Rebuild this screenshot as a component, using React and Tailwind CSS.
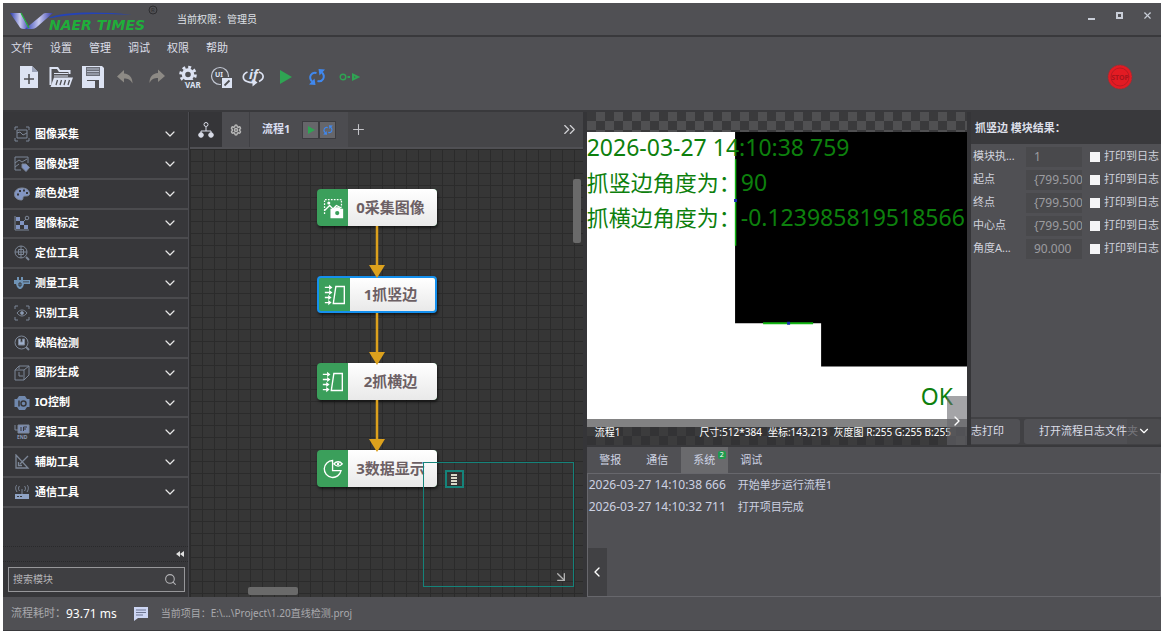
import clsx from "clsx";
import { ArrowDownRight, ChevronDown, ChevronLeft, ChevronRight, ChevronsRight, Plus, Search, Settings, X } from "lucide-react";

const MENUS = ["文件", "设置", "管理", "调试", "权限", "帮助"];

const RESULTS = [
    { name: "模块执...", value: "1" },
    { name: "起点", value: "{799.500" },
    { name: "终点", value: "{799.500" },
    { name: "中心点", value: "{799.500" },
    { name: "角度A...", value: "90.000" },
];

const LOG_TABS = [
    { label: "警报" },
    { label: "通信" },
    { label: "系统", active: true, count: 2 },
    { label: "调试" },
];

const LOGS = [
    { time: "2026-03-27 14:10:38 666", text: "开始单步运行流程1" },
    { time: "2026-03-27 14:10:32 711", text: "打开项目完成" },
];

const loopIcon = (
    <>
        <path d="M11.500 8C6.500 6.500 3 12 7 16.500M12.500 16c5 1.500 8.500-4 4.500-8.500" fill="none" stroke="#4088ee" strokeWidth="2" />
        <path d="M4 19.500 10.500 20l-1-6.500zM20 4.500 13.500 4l1 6.500z" fill="#4088ee" />
    </>
);

/* toolbar icons, 24x24 */
const TOOLS = [
    {
        name: "新建",
        icon: (
            <>
                <path d="M3 1h12l6 6v16H3z" fill="#dde3f3" />
                <path d="M15 1v6h6" fill="#9aa2b8" />
                <path d="M12 9v10M7 14h10" stroke="#505054" strokeWidth="1.6" />
            </>
        ),
    },
    {
        name: "打开",
        icon: (
            <>
                <path d="M1.500 20V3h7l2 3h10v3" fill="none" stroke="#dde3f3" strokeWidth="2" />
                <path d="M5 8.500h14M5 11h14" stroke="#dde3f3" strokeWidth="1" />
                <path d="M5 12.500h19l-3.500 9.500H1.500z" fill="#dde3f3" />
                <path d="M7 20l1.500-5M11 20l1.500-5M15 20l1.500-5M19 20l1.500-5" stroke="#505054" strokeWidth="1.300" />
            </>
        ),
    },
    {
        name: "保存",
        icon: (
            <>
                <path d="M1 1h20l2 2v20H1z" fill="#dde3f3" />
                <path d="M5 2h14v9H5z" fill="#6b6e78" />
                <path d="M6 4h12M6 6.500h12M6 9h12" stroke="#b9bfce" strokeWidth="1" />
                <path d="M6 15h12v8H6z" fill="#505054" />
                <path d="M6 16h8v7H6z" fill="#dde3f3" />
            </>
        ),
    },
    {
        name: "撤销",
        icon: <path d="M11 5 4 11.500l7 6v-4c4 0 6.500 1 8.500 5 0-6-3-9.500-8.500-10z" fill="#8d8a85" />,
    },
    {
        name: "重做",
        icon: <path d="M13 4.500 20 11l-7 6v-4c-4 0-6.500 1-8.500 5 0-6 3-9.500 8.500-10z" fill="#8d8a85" />,
    },
    {
        name: "变量",
        icon: (
            <>
                <circle cx="11" cy="9.500" r="4.500" fill="none" stroke="#dde3f3" strokeWidth="3.400" />
                <circle cx="11" cy="9.500" r="7.300" fill="none" stroke="#dde3f3" strokeWidth="3" strokeDasharray="2.860 2.870" />
                <path d="M8 15h16v9H8z" fill="#505054" />
                <text x="8" y="23" fontSize="8" fontWeight="bold" fill="#dde3f3">VAR</text>
            </>
        ),
    },
    {
        name: "界面",
        icon: (
            <>
                <circle cx="11" cy="11" r="8.500" fill="none" stroke="#c3c8d4" strokeWidth="1.200" />
                <text x="6" y="12" fontSize="7" fontWeight="bold" fill="#dde3f3">UI</text>
                <path d="M12 12h11v11H12z" fill="#505054" />
                <path d="M13 13h10v10H13z" fill="#dde3f3" />
                <path d="m15.500 20.500 5-5" stroke="#505054" strokeWidth="1.800" />
            </>
        ),
    },
    {
        name: "条件",
        icon: (
            <>
                <path d="M6.500 7C1 9 1 14.500 6 16.500c2 .9 5 1.300 7 1.200M18 7c5.500 2 5.500 7 0 9.500" fill="none" stroke="#dde3f3" strokeWidth="1.700" />
                <path d="m11.500 13.500 5 4-5 4z" fill="#dde3f3" />
                <text x="8" y="14" fontSize="13" fontStyle="italic" fontWeight="bold" fill="#dde3f3">if</text>
            </>
        ),
    },
    {
        name: "运行",
        icon: <path d="M7 5v14l12-7z" fill="#2fa453" />,
    },
    { name: "循环", icon: loopIcon },
    {
        name: "单步",
        icon: (
            <>
                <circle cx="6" cy="12" r="2.800" fill="none" stroke="#2fa453" strokeWidth="1.400" />
                <path d="M10.500 12h2.500" stroke="#2fa453" strokeWidth="2" />
                <path d="M16 9.500v5l5-2.500z" fill="none" stroke="#2fa453" strokeWidth="2" />
            </>
        ),
    },
];

/* module groups, 16x16 icons stroked with currentColor */
const MODULES = [
    { label: "图像采集", icon: <path d="M1 4V1h3M12 1h3v3M15 12v3h-3M4 15H1v-3M3 4h10v8H3zM3 7l3-1 3 3 4-2" /> },
    {
        label: "图像处理",
        icon: (
            <>
                <path d="M7 14H1V1h13v6M1 7l4-3 3 2 5-3M1 11l4-3" />
                <path d="M8 8h4l3.500 3.500-3.500 4L8 11.500z" fill="#8295c2" />
            </>
        ),
    },
    {
        label: "颜色处理",
        icon: (
            <>
                <path d="M8 2C3 2 .5 5 .5 8.500S4 14 7.500 14c2 0 1-2.500 2-3.500s5.500.5 6-2.500C15.500 4 12 2 8 2z" fill="#8295c2" />
                <path d="M3 8.500h2M5 5h2M9 4.500h2M12 7h2" stroke="#37373a" strokeWidth="2" />
            </>
        ),
    },
    {
        label: "图像标定",
        icon: (
            <>
                <path d="M1 1v14h14M3 13l9-9" />
                <path d="M2 2h4v4H2zM6 6h4v4H6zM2 10h4v4H2zM10 10h4v4h-4z" fill="#8295c2" stroke="none" />
                <circle cx="13" cy="3" r="1.800" />
            </>
        ),
    },
    {
        label: "定位工具",
        icon: (
            <>
                <circle cx="7" cy="7" r="6" />
                <path d="M7 1v12M1 7h12M4.500 4.500h5v5h-5z" />
                <path d="m12 12 3 3" strokeWidth="2" />
            </>
        ),
    },
    {
        label: "测量工具",
        icon: (
            <>
                <path d="M0 5h16v4H10l-1 3-2 2H5l-2-2-1-3H0zM3 2h2v3H3zM7 2h2v3H7z" fill="#6f93b5" stroke="none" />
                <path d="M5 8h2v3H5zM10 6v1.500M12 6v1.500M14 6v1.500" stroke="#37373a" />
            </>
        ),
    },
    {
        label: "识别工具",
        icon: (
            <>
                <path d="M1 4V1h3M12 1h3v3M15 12v3h-3M4 15H1v-3M3 8c3-4 7-4 10 0-3 4-7 4-10 0z" />
                <circle cx="8" cy="8" r="1.500" fill="#8fa3c4" />
            </>
        ),
    },
    {
        label: "缺陷检测",
        icon: (
            <>
                <circle cx="7.500" cy="7.500" r="6.500" />
                <path d="M4.500 4v6h6V4H8.500v3h-2V4z" fill="#9fb0cc" />
                <path d="m12 12 3 3" strokeWidth="2" />
            </>
        ),
    },
    { label: "图形生成", icon: <path d="M1 5h9v10H1zM1 5l4-4h10l-5 4M15 1v9l-5 5M5 1v3M5 7v4h4" /> },
    {
        label: "IO控制",
        icon: (
            <>
                <path d="M5 1h6l2 3h2.500v8H13l-2 3H5l-2-3H.5V4H3z" fill="#7088ad" stroke="none" />
                <path d="M5 5.500v6" stroke="#37373a" strokeWidth="1.500" />
                <circle cx="9.500" cy="8.500" r="2.500" stroke="#37373a" strokeWidth="1.500" />
            </>
        ),
    },
    {
        label: "逻辑工具",
        icon: (
            <>
                <path d="M4 1h11v8H4z" fill="#7c8db2" />
                <path d="M1 1v5h3" />
                <path d="M7 3v4M9.500 7V3H13M9.500 5H12" stroke="#37373a" />
                <text x="3" y="15" fontSize="5" fontWeight="bold" fill="#8a97b4" stroke="none">END</text>
            </>
        ),
    },
    { label: "辅助工具", icon: <path d="M2 1v13h12zM4.500 8v3.500H8M6 10l8-8" strokeWidth="1.300" /> },
    {
        label: "通信工具",
        icon: (
            <>
                <path d="M1 10h14v5H1z" fill="#8fa3c4" stroke="none" />
                <path d="M8 10V5M5.500 7c-1.500-2-1-4 0-5M10.500 7c1.500-2 1-4 0-5M3 8C1 5 1.500 2 3 1M13 8c2-3 1.500-6 0-7" />
                <path d="M3 12.500h2M6 12.500h2" stroke="#37373a" />
            </>
        ),
    },
];

const edgeIcon = (
    <>
        <path d="M11 23 14 3h10v20z" fill="none" stroke="#fff" strokeWidth="1.600" />
        <path d="M1 4h5M1 10h5M1 16h5M1 22h5" stroke="#fff" strokeWidth="1.600" />
        <path d="m6 1 4 3-4 3zM6 7l4 3-4 3zM5 13l4 3-4 3zM5 19l4 3-4 3z" fill="#fff" />
    </>
);

const NODES = [
    {
        label: "0采集图像",
        place: "top-[40px]",
        icon: (
            <>
                <path d="M3 20V3h20v9" fill="none" stroke="#fff" strokeWidth="1.500" strokeDasharray="2 1.500" />
                <path d="m3 16 6-6 4 4 4-4 6 3" fill="none" stroke="#fff" strokeWidth="1.500" />
                <circle cx="8" cy="7" r="1.800" fill="#fff" />
                <path d="M10 14h4l1.500-2h5l1.500 2h3v11H10z" fill="#fff" />
                <circle cx="18" cy="19" r="2.500" fill="#3b9f5b" />
            </>
        ),
    },
    { label: "1抓竖边", place: "top-[127px]", selected: true, icon: edgeIcon },
    { label: "2抓横边", place: "top-[214px]", icon: edgeIcon },
    {
        label: "3数据显示",
        place: "top-[301px]",
        icon: (
            <>
                <path d="M12.500 3a10 10 0 1 0 10 12h-10z" fill="none" stroke="#fff" strokeWidth="1.600" />
                <path d="M14 7c3-3.500 7-3.500 10 0-3 3.500-7 3.500-10 0z" fill="none" stroke="#fff" strokeWidth="1.600" />
                <circle cx="19" cy="7" r="1.500" fill="#fff" />
            </>
        ),
    },
];

const ARROWS = ["top-[77px]", "top-[164px]", "top-[251px]"];

function Logo() {
    return (
        <svg viewBox="0 0 152 28" className="h-7 w-[152px]" aria-label="NAER TIMES">
            <defs>
                <linearGradient id="wing" x1="0" x2="1">
                    <stop offset="0" stopColor="#2a3bb0" />
                    <stop offset="0.500" stopColor="#c9cbf0" />
                    <stop offset="1" stopColor="#3137a8" />
                </linearGradient>
            </defs>
            <path d="M2 8h11l9 16h-6c-3 0-4-1-5-3z" fill="url(#wing)" />
            <path d="M17 24 34 10c2-2 3-2 5-2h6L30 21c-3 3-5 3-8 3z" fill="url(#wing)" />
            <path d="M13 8l8 15" stroke="#22b43a" strokeWidth="1.200" />
            <path d="M40 13C55 7 90 6 124 10 90 8 62 9 44 13z" fill="#2443b8" />
            <text x="41" y="25" fontSize="14" fontWeight="bold" fontStyle="italic" fontFamily="DejaVu Sans, sans-serif" fill="#1fae3a">NAER TIMES</text>
            <circle cx="145" cy="5" r="4" fill="none" stroke="#2d2d30" />
            <text x="143" y="7" fontSize="6" fill="#2d2d30">R</text>
        </svg>
    );
}

function TitleBar() {
    return (
        <header className="flex h-8 shrink-0 items-center pl-[5px]">
            <Logo />
            <p className="ml-[17px] text-[10px] text-[#dfe0e6]">当前权限：管理员</p>
            <div className="ml-auto flex items-center gap-2 pr-1 text-[#c9ced8]">
                <button aria-label="最小化" className="flex h-5 w-5 items-center justify-center">
                    <span className="h-[2px] w-[7px] bg-current" />
                </button>
                <button aria-label="最大化" className="flex h-5 w-5 items-center justify-center pb-2">
                    <span className="h-[7px] w-[7px] border-2 border-current" />
                </button>
                <button aria-label="关闭" className="flex h-5 w-5 items-center justify-center pb-2">
                    <X size={11} strokeWidth={2.5} />
                </button>
            </div>
        </header>
    );
}

function Toolbar() {
    return (
        <div className="flex h-[77px] shrink-0 items-start border-y-2 border-[#39393c]">
            <div>
                <nav className="flex h-[22px] items-center gap-[17px] pl-2 text-[11px] text-[#dcdee8]">
                    {MENUS.map((menu) => <button key={menu}>{menu}</button>)}
                </nav>
                <div className="flex h-9 items-center pl-[10px]">
                    {TOOLS.map((tool) => (
                        <button key={tool.name} aria-label={tool.name} className="flex w-8 justify-center">
                            <svg viewBox="0 0 24 24" className="h-6 w-6">{tool.icon}</svg>
                        </button>
                    ))}
                </div>
            </div>
            <button aria-label="停止" className="mt-[27px] mr-7 ml-auto">
                <svg viewBox="0 0 26 26" className="h-[26px] w-[26px]">
                    <circle cx="13" cy="13" r="12" fill="#e31b23" stroke="#8f3338" strokeDasharray="2 1" />
                    <circle cx="13" cy="13" r="9" fill="none" stroke="#b81a22" />
                    <text x="13" y="16" fontSize="7" fontWeight="bold" textAnchor="middle" fill="#a8141c">STOP</text>
                </svg>
            </button>
        </div>
    );
}

function Sidebar() {
    return (
        <aside className="flex w-[186px] shrink-0 flex-col border-r border-[#4b4b50] bg-[#37373a] pt-2">
            <ul className="flex flex-1 flex-col">
                {MODULES.map((item) => (
                    <li key={item.label} className="flex flex-1 border-b-2 border-[#4b4b4e]">
                        <button className="flex flex-1 items-center pr-[10px] pl-[11px]">
                            <svg viewBox="0 0 16 16" fill="none" stroke="currentColor" className="h-4 w-4 text-[#7d8797]">{item.icon}</svg>
                            <span className="ml-[5px] text-[11px] font-bold text-white">{item.label}</span>
                            <ChevronDown size={16} strokeWidth={1.8} className="ml-auto text-[#e6e6e6]" />
                        </button>
                    </li>
                ))}
            </ul>
            <div className="mt-[38px] flex h-4 items-center justify-end border-y border-dotted border-[#29292b] pr-1">
                <button aria-label="收起">
                    <svg viewBox="0 0 8 6" className="h-1.5 w-2"><path d="M4 0v6L0 3zM8 0v6L4 3z" fill="#e0e0e0" /></svg>
                </button>
            </div>
            <label className="my-[5px] mr-[3px] ml-[5px] flex h-[25px] items-center border border-[#97979a] bg-[#3f3f42] px-1">
                <input type="text" aria-label="搜索模块" placeholder="搜索模块" className="min-w-0 flex-1 text-[10px] outline-none placeholder:text-[#b3b3b6]" />
                <Search size={13} className="mr-[3px] text-[#b3b3b6]" />
            </label>
        </aside>
    );
}

function FlowTabs() {
    return (
        <div className="flex h-[35px] shrink-0 items-stretch bg-[#454548]">
            <button aria-label="流程图" className="flex w-8 items-center justify-center bg-[#353538]">
                <svg viewBox="0 0 16 16" className="h-4 w-4" fill="none" stroke="#d8dbe6">
                    <circle cx="8" cy="2.500" r="2" />
                    <path d="M8 5v4M3 11V9h10v2" />
                    <circle cx="3" cy="13" r="2.300" fill="#d8dbe6" />
                    <circle cx="13" cy="13" r="2.300" fill="#d8dbe6" />
                </svg>
            </button>
            <div className="flex w-[126px] items-center bg-[#4c4c50]">
                <button aria-label="流程设置" className="flex w-7 items-center justify-center self-stretch border-r border-[#404044] text-[#b5b5b5]">
                    <Settings size={12} strokeWidth={3} />
                </button>
                <button className="ml-3 text-[11px] font-bold text-[#d9def0]">流程1</button>
                <button aria-label="运行流程" className="ml-3 flex h-[18px] w-[17px] items-center justify-center border border-[#3c3c40] bg-[#66666a]">
                    <svg viewBox="0 0 10 10" className="h-2.5 w-2.5"><path d="M2 1v8l7-4z" fill="#2fa453" /></svg>
                </button>
                <button aria-label="循环流程" className="flex h-[18px] w-[17px] items-center justify-center border border-[#3c3c40] bg-[#66666a]">
                    <svg viewBox="2 2 20 20" className="h-3 w-3">{loopIcon}</svg>
                </button>
            </div>
            <button aria-label="新增流程" className="px-[2px] text-[#c4c4c8]"><Plus size={17} strokeWidth={1.5} /></button>
            <button aria-label="更多" className="mr-1 ml-auto text-[#d2d2d6]"><ChevronsRight size={19} strokeWidth={1.5} /></button>
        </div>
    );
}

function FlowNode({ node }) {
    return (
        <button
            className={clsx(
                "absolute left-[127px] flex h-[37px] w-[120px] overflow-hidden rounded-[4px] bg-[#3b9f5b] shadow-[1px_2px_3px_rgba(0,0,0,0.6)]",
                node.selected && "border-2 border-[#1590ee]",
                node.place,
            )}
        >
            <span className="flex h-full w-[31px] items-center justify-center">
                <svg viewBox="0 0 26 26" className="h-[22px] w-[22px]">{node.icon}</svg>
            </span>
            <span className="flex h-full flex-1 items-center justify-center bg-linear-to-b from-white to-[#e9e9e9] pr-1 text-[15px] font-bold whitespace-nowrap text-[#6c6064]">
                {node.label}
            </span>
        </button>
    );
}

function FlowPanel() {
    return (
        <section className="flex w-[34%] shrink-0 flex-col border-l border-[#2e2e30]">
            <FlowTabs />
            <div className="relative flex-1 overflow-hidden border-t-2 border-[#505054] bg-[#363636] bg-[linear-gradient(to_right,#2b2b2b_1px,transparent_1px),linear-gradient(to_bottom,#2b2b2b_1px,transparent_1px)] bg-[size:12px_12px]">
                {NODES.map((node) => <FlowNode key={node.label} node={node} />)}
                {ARROWS.map((place) => (
                    <svg key={place} viewBox="0 0 16 52" className={clsx("absolute left-[179px] h-[52px] w-4", place)}>
                        <path d="M8 0v42" stroke="#dca11d" strokeWidth="2.500" />
                        <path d="M0 39h16L8 52z" fill="#dca11d" />
                    </svg>
                ))}
                <span className="absolute top-[30px] right-[2px] h-16 w-2 rounded-xs bg-[#6a6a6a]" />
                <span className="absolute bottom-[2px] left-[58px] h-2 w-[50px] rounded-xs bg-[#6a6a6a]" />
                <div className="absolute right-[9px] bottom-[10px] h-[125px] w-[151px] border border-[#15837a]">
                    <div className="mt-[7px] ml-[21px] flex h-[18px] w-[19px] flex-col items-center justify-center gap-[1px] border-2 border-[#15837a]">
                        <span className="h-[2px] w-[6px] bg-[#d8d8c8]" />
                        <span className="h-[2px] w-[6px] bg-[#d8d8c8]" />
                        <span className="h-[2px] w-[6px] bg-[#d8d8c8]" />
                        <span className="h-[2px] w-[6px] bg-[#d8d8c8]" />
                    </div>
                    <ArrowDownRight size={16} className="absolute right-1 bottom-[1px] text-[#b0b0b0]" />
                </div>
            </div>
        </section>
    );
}

function ImageView() {
    return (
        <section className="relative flex min-w-0 flex-[2] flex-col bg-[#3c3c3e] bg-[repeating-conic-gradient(#505052_0_25%,#3a3a3c_0_50%)] bg-[size:18px_18px] pt-5">
            <div className="relative flex-1 overflow-hidden bg-white">
                <svg viewBox="0 0 380 293" preserveAspectRatio="none" className="absolute inset-0 h-full w-full">
                    <path d="M148 0h232v233H234v-43h-86z" fill="#000" />
                    <path d="M148.500 27v86" stroke="#12b512" strokeWidth="1.500" />
                    <path d="M176 190h50" stroke="#12b512" strokeWidth="2" />
                    <path d="M147 68h3M200 190h3" stroke="#1530b0" strokeWidth="3" />
                </svg>
                <div className="relative -mt-[2px] text-[23px] leading-[35px] whitespace-nowrap text-[#0d800d]">
                    <p>2026-03-27 14:10:38 759</p>
                    <p className="flex"><span className="text-[22px]">抓竖边角度为：</span>90</p>
                    <p className="flex"><span className="text-[22px]">抓横边角度为：</span>-0.123985819518566</p>
                </div>
                <p className="absolute right-[14px] bottom-[13px] text-[23px] leading-[35px] text-[#0d800d]">OK</p>
            </div>
            <div className="h-[18px] shrink-0" />
            <div className="absolute inset-x-0 bottom-0 flex h-[26px] items-center overflow-hidden bg-[#2e2e30]/60 pl-2 text-[10px] whitespace-nowrap text-white">
                <span>流程1</span>
                <span className="mr-[6px] ml-auto">尺寸:512*384</span>
                <span className="mr-[6px]">坐标:143,213</span>
                <span className="mr-4">灰度图 R:255 G:255 B:255</span>
            </div>
            <button aria-label="展开" className="absolute right-0 bottom-0 flex h-[49px] w-5 items-center justify-center bg-[#68686c]/60 text-white">
                <ChevronRight size={16} />
            </button>
        </section>
    );
}

function ResultPanel() {
    return (
        <section className="flex min-w-0 flex-1 flex-col">
            <h2 className="flex h-8 shrink-0 items-center bg-[#39393c] pl-1 text-[11px] font-bold text-[#dcdfe8]">抓竖边 模块结果：</h2>
            <div className="flex flex-1 flex-col overflow-hidden pt-px pl-[2px] text-[11px] whitespace-nowrap text-[#d0d3dd]">
                {RESULTS.map((row, index) => (
                    <div key={row.name} className="flex h-[23px] items-center">
                        <label htmlFor={`result-${index}`} className="w-[53px] shrink-0">{row.name}</label>
                        <input
                            id={`result-${index}`}
                            type="text"
                            readOnly
                            value={row.value}
                            className="h-5 w-[56px] shrink-0 bg-[#49494c] pl-2 text-[12px] text-[#9c9ca0] outline-none"
                        />
                        <label className="ml-2 flex items-center gap-1">
                            <input type="checkbox" className="h-[10px] w-[10px] shrink-0 appearance-none bg-[#f4f4f6]" />
                            打印到日志
                        </label>
                    </div>
                ))}
            </div>
            <div className="flex h-[28px] shrink-0 items-center gap-1 overflow-hidden bg-[#414144] text-[11px] whitespace-nowrap text-[#dcdee8]">
                <button className="h-[25px] w-[49px] shrink-0 rounded-r-[3px] bg-[#505054] text-left">志打印</button>
                <button className="flex h-[25px] min-w-0 flex-1 items-center rounded-[3px] bg-[#505054] pl-[15px]">打开流程日志文件夹</button>
                <button aria-label="更多操作" className="-ml-[38px] flex h-[25px] w-[34px] shrink-0 items-center justify-center bg-[#48484b]/70 text-white">
                    <ChevronDown size={14} />
                </button>
            </div>
        </section>
    );
}

function LogPanel() {
    return (
        <section className="flex h-[152px] shrink-0 flex-col border-t-2 border-[#39393c] bg-[#505054] text-[#cdd2e2]">
            <div className="flex h-[26px] shrink-0 text-[11px]">
                {LOG_TABS.map((tab) => (
                    <button key={tab.label} className={clsx("relative w-[47px]", tab.active && "bg-[#6a6a6d]")}>
                        {tab.label}
                        {tab.count ? (
                            <span className="absolute top-1 right-[2px] h-2 w-2 rounded-xs bg-[#1f9a4e] text-[7px] leading-[8px] text-white">{tab.count}</span>
                        ) : null}
                    </button>
                ))}
            </div>
            <div className="relative flex-1 border border-[#67676c] pl-px">
                <ul>
                    {LOGS.map((log) => (
                        <li key={log.time} className="flex h-[22px] items-center gap-3 text-[11px]">
                            <time className="text-[12px]">{log.time}</time>
                            <span>{log.text}</span>
                        </li>
                    ))}
                </ul>
                <button aria-label="展开侧栏" className="absolute bottom-0 left-0 flex h-12 w-[19px] items-center justify-center bg-[#414144] text-white">
                    <ChevronLeft size={16} />
                </button>
            </div>
        </section>
    );
}

function StatusBar() {
    return (
        <footer className="flex h-[34px] shrink-0 items-center border-b border-[#39393c] pl-2 text-[10px] text-[#a9a9ad]">
            <span className="text-[11px]">流程耗时：</span>
            <span className="text-[12px] text-white">93.71 ms</span>
            <svg viewBox="0 0 16 16" className="mr-3 ml-4 h-4 w-4">
                <path d="M1 1h14v11H5l-4 3z" fill="#cdd6f4" />
                <path d="M3 4h10M3 6.500h10M3 9h7" stroke="#6d7591" />
            </svg>
            <span>当前项目：E:\...\Project\1.20直线检测.proj</span>
        </footer>
    );
}

export default function App() {
    return (
        <div className="h-screen bg-white pt-[3px] pr-[5px] pb-[5px] pl-[3px] font-['Noto_Sans','Noto_Sans_CJK_SC',sans-serif]">
            <div className="flex h-full flex-col overflow-hidden bg-[#505054]">
                <TitleBar />
                <Toolbar />
                <main className="flex min-h-0 flex-1 bg-[#3a3a3d]">
                    <Sidebar />
                    <FlowPanel />
                    <div className="flex min-w-0 flex-1 flex-col border-l-4 border-[#353538] bg-[#505054]">
                        <div className="flex min-h-0 flex-1">
                            <ImageView />
                            <div className="w-1 shrink-0 bg-[#353538]" />
                            <ResultPanel />
                        </div>
                        <LogPanel />
                    </div>
                </main>
                <StatusBar />
            </div>
        </div>
    );
}
